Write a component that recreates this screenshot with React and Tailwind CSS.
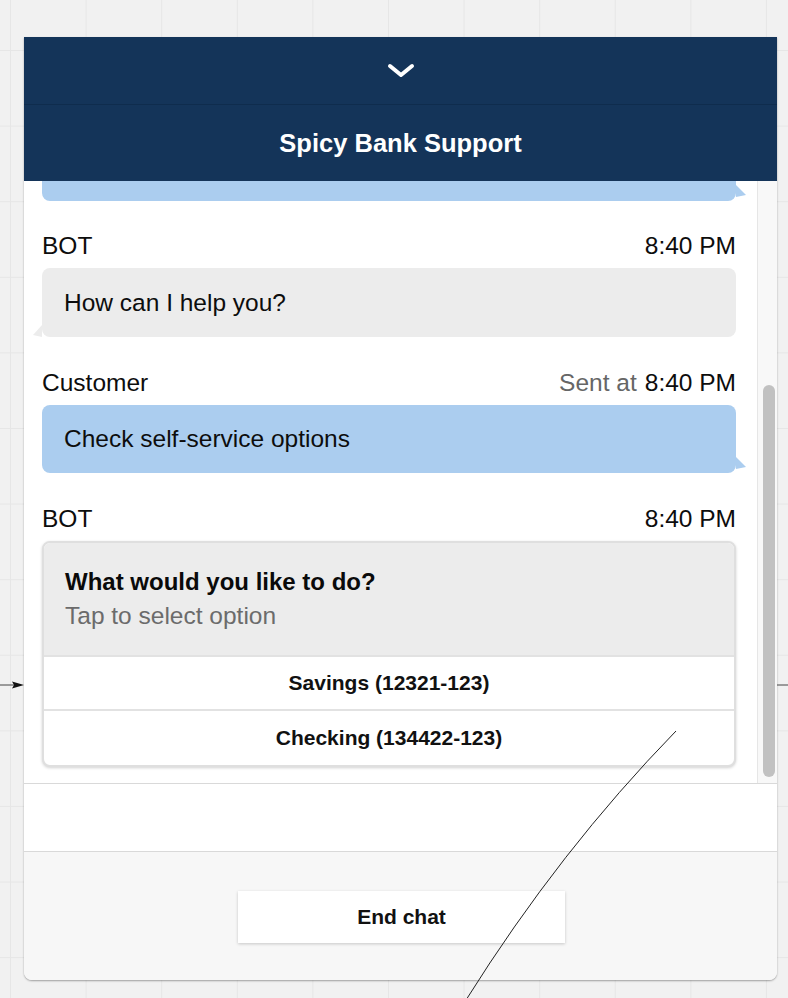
import React from "react";

function RightTail({ color }) {
  return (
    <svg className="absolute right-[-10px] bottom-[4px]" width="10" height="12" viewBox="0 0 10 12">
      <polygon points="0,0 10,10 0,12" fill={color} />
    </svg>
  );
}

function LeftTail({ color }) {
  return (
    <svg className="absolute left-[-9px] bottom-[0px]" width="9" height="12" viewBox="0 0 9 12">
      <polygon points="9,0 0,10 9,12" fill={color} />
    </svg>
  );
}

function Label({ name, sent }) {
  return (
    <div className="mt-[32px] flex justify-between text-[24.5px] leading-[27px] text-[#0d0d0d]">
      <span>{name}</span>
      <span className="flex gap-[8px]">
        {sent && <span className="text-[#666666]">Sent at</span>}
        <span>8:40 PM</span>
      </span>
    </div>
  );
}

export default function App() {
  return (
    <div className="relative w-[788px] h-[998px] overflow-hidden bg-[#f1f1f1] bg-[linear-gradient(to_right,#e6e6e6_1px,transparent_1px),linear-gradient(to_bottom,#e6e6e6_1px,transparent_1px)] [background-size:75.6px_75.6px] [background-position:10px_50px] pt-[37px] pl-[24px] font-['Liberation_Sans',Arial,sans-serif]">
      <div className="w-[753px] h-[943px] flex flex-col rounded-b-[8px] overflow-hidden bg-white shadow-[0_1px_2px_rgba(0,0,0,0.35)]">
        {/* header */}
        <div className="h-[67px] bg-[#143459] flex items-center justify-center">
          <svg width="28" height="15" viewBox="0 0 28 15">
            <path d="M3 3 L14 12 L25 3" fill="none" stroke="#ffffff" strokeWidth="4" strokeLinecap="round" strokeLinejoin="round" />
          </svg>
        </div>
        <div className="h-px bg-[#0f2c4d]" />
        <div className="h-[76px] bg-[#143459] flex items-center justify-center text-white font-bold text-[25.5px]">
          Spicy Bank Support
        </div>

        {/* chat area */}
        <div className="h-[602px] flex overflow-hidden">
          <div className="flex-1 pl-[18px] pr-[21px]">
            <div className="relative h-[20px] bg-[#abcdef] rounded-b-[8px]">
              <RightTail color="#abcdef" />
            </div>

            <div className="mt-[-1px]" />
            <Label name="BOT" />
            <div className="relative mt-[9px] bg-[#ececec] rounded-[8px] px-[22px] py-[20px] text-[24.5px] leading-[29px] text-[#0d0d0d]">
              <LeftTail color="#ececec" />
              How can I help you?
            </div>

            <Label name="Customer" sent />
            <div className="relative mt-[9px] bg-[#abcdef] rounded-[8px] px-[22px] py-[20px] text-[24.5px] leading-[28px] text-[#0d0d0d]">
              <RightTail color="#abcdef" />
              Check self-service options
            </div>

            <Label name="BOT" />
            <div className="mt-[9px] rounded-[8px] border-2 border-[#dfdfdf] bg-white overflow-hidden shadow-[0_1px_3px_rgba(0,0,0,0.18)]">
              <div className="bg-[#ececec] px-[21px] py-[22px] leading-[34px]">
                <div className="font-bold text-[24px] text-[#0a0a0a]">What would you like to do?</div>
                <div className="text-[24.5px] text-[#6b6b6b]">Tap to select option</div>
              </div>
              <div className="h-[54px] border-t-2 border-[#e2e2e2] flex items-center justify-center font-bold text-[21px] text-[#111111]">
                Savings (12321-123)
              </div>
              <div className="h-[56px] border-t-2 border-[#e2e2e2] flex items-center justify-center font-bold text-[21px] text-[#111111]">
                Checking (134422-123)
              </div>
            </div>
          </div>
          <div className="w-[20px] bg-[#f8f8f8] border-l border-[#e6e6e6] pl-[5px] pt-[204px]">
            <div className="w-[12px] h-[392px] rounded-full bg-[#c1c1c1]" />
          </div>
        </div>

        <div className="h-px bg-[#d9d9d9]" />
        <div className="h-[67px] bg-white" />
        <div className="h-px bg-[#d9d9d9]" />
        <div className="flex-1 bg-[#f7f7f7] flex justify-center pt-[39px]">
          <div className="ml-[2px] w-[327px] h-[52px] bg-white shadow-[0_1px_3px_rgba(0,0,0,0.2)] flex items-center justify-center font-bold text-[21px] text-[#111111]">
            End chat
          </div>
        </div>
      </div>

      {/* canvas connectors over the widget */}
      <svg className="absolute left-0 top-0 pointer-events-none" width="788" height="998" viewBox="0 0 788 998">
        <line x1="0" y1="685" x2="14" y2="685" stroke="#444" strokeWidth="1" />
        <polygon points="12,681.5 24,685 12,688.5 14,685" fill="#111" />
        <line x1="777" y1="685" x2="788" y2="685" stroke="#444" strokeWidth="1" />
        <path d="M676 731 Q 560 850 466 1000" fill="none" stroke="#222" strokeWidth="1" />
      </svg>
    </div>
  );
}
